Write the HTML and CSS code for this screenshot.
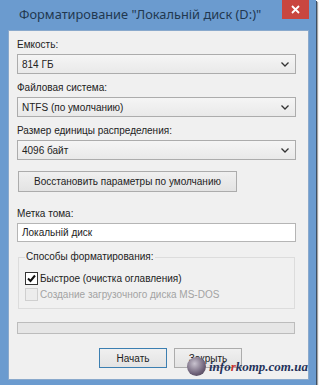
FILE: index.html
```html
<!DOCTYPE html>
<html lang="ru">
<head>
    <meta charset="UTF-8">
    <meta name="viewport" content="width=device-width, initial-scale=1.0">
    <title>Форматирование</title>
    <link rel="stylesheet" href="styles.css">
</head>
<body>
    <div class="window">
        <div class="titlebar">
            <span class="title">Форматирование "Локальній диск (D:)"</span>
            <span class="close">
                <svg width="9" height="9" viewBox="0 0 9 9"><path d="M1 1L8 8M8 1L1 8" stroke="#fff" stroke-width="1.8"/></svg>
            </span>
        </div>

        <div class="content">
            <div class="field">
                <label>Емкость:</label>
                <div class="select">
                    <span>814 ГБ</span>
                    <svg class="chevron" width="8" height="5" viewBox="0 0 8 5"><path d="M0.5 0.5L4 4L7.5 0.5" fill="none" stroke="#333" stroke-width="1.3"/></svg>
                </div>
            </div>
            <div class="field">
                <label>Файловая система:</label>
                <div class="select">
                    <span>NTFS (по умолчанию)</span>
                    <svg class="chevron" width="8" height="5" viewBox="0 0 8 5"><path d="M0.5 0.5L4 4L7.5 0.5" fill="none" stroke="#333" stroke-width="1.3"/></svg>
                </div>
            </div>
            <div class="field">
                <label>Размер единицы распределения:</label>
                <div class="select">
                    <span>4096 байт</span>
                    <svg class="chevron" width="8" height="5" viewBox="0 0 8 5"><path d="M0.5 0.5L4 4L7.5 0.5" fill="none" stroke="#333" stroke-width="1.3"/></svg>
                </div>
            </div>

            <div class="restore-row">
                <div class="btn restore">Восстановить параметры по умолчанию</div>
            </div>

            <div class="field label-field">
                <label>Метка тома:</label>
                <div class="input">Локальній диск</div>
            </div>

            <fieldset class="group">
                <legend>Способы форматирования:</legend>
                <div class="check">
                    <span class="box">
                        <svg width="11" height="11" viewBox="0 0 11 11"><path d="M2 5.5L4.5 8L9 2.5" fill="none" stroke="#111" stroke-width="2"/></svg>
                    </span>
                    Быстрое (очистка оглавления)
                </div>
                <div class="check disabled">
                    <span class="box"></span>
                    Создание загрузочного диска MS-DOS
                </div>
            </fieldset>

            <div class="progress"></div>

            <div class="actions">
                <div class="btn default">Начать</div>
                <div class="btn">Закрыть</div>
            </div>
        </div>
    </div>

    <!-- водяной знак -->
    <div class="watermark">
        <span class="logo"></span>
        <span class="site">info<span class="red">r</span>komp.com.ua</span>
    </div>
</body>
</html>
```

FILE: styles.css
```css
/* окно */
body {
    margin: 0;
    background-color: #ffffff;
    font-family: 'Liberation Sans', Arial, sans-serif;
    font-size: 10px;
    color: #222;
}

.window {
    width: 316px;
    height: 385px;
    background-color: #6b9bcf;
    display: flex;
    flex-direction: column;
    box-shadow: 1px 1px 0 #3d4f63, 2px 2px 1px rgba(0, 0, 0, 0.35);
}

.titlebar {
    height: 30px;
    display: flex;
    justify-content: space-between;
    align-items: flex-start;
}

.title {
    margin-left: 19px;
    margin-top: 5px;
    font-family: 'Noto Sans', sans-serif;
    font-size: 12.8px;
    color: #22384f;
    white-space: nowrap;
}

.close {
    width: 27px;
    height: 19px;
    margin-right: 7px;
    background-color: #c9463f;
    display: flex;
    align-items: center;
    justify-content: center;
}

.content {
    flex: 1;
    margin: 0 7px 5px 8px;
    padding: 8px 13px 0 9px;
    background-color: #f0f0f0;
    box-shadow: inset 0 0 0 1px #8aa9cc;
}

/* поля */
.field {
    margin-bottom: 7px;
}

.field label {
    display: block;
    line-height: 14px;
    margin-bottom: 2px;
}

.select {
    height: 18px;
    border: 1px solid #acacac;
    background: linear-gradient(#f5f5f5, #e9e9e9);
    display: flex;
    align-items: center;
    justify-content: space-between;
    padding: 0 6px 0 4px;
}

.input {
    height: 17px;
    line-height: 17px;
    border: 1px solid #b5b5b5;
    background-color: #ffffff;
    padding: 0 4px;
}

.label-field {
    margin-bottom: 8px;
}

/* кнопки */
.btn {
    box-sizing: border-box;
    height: 21px;
    border: 1px solid #acacac;
    background: linear-gradient(#f0f0f0, #e3e3e3);
    display: flex;
    align-items: center;
    justify-content: center;
    white-space: nowrap;
}

.restore-row {
    display: flex;
    margin: 11px 0 15px 1px;
}

.restore {
    width: 219px;
}

.default {
    border-color: #3c7fb1;
}

.actions {
    display: flex;
    gap: 7px;
    margin-top: 14px;
    padding-left: 82px;
}

.actions .btn {
    width: 68px;
    height: 20px;
}

/* группа */
.group {
    margin: 0 1px;
    padding: 6px 6px 6px;
    border: 1px solid #dcdcdc;
}

.group legend {
    padding: 0 1px;
    line-height: 14px;
}

.check {
    height: 16px;
    display: flex;
    align-items: center;
    gap: 2px;
}

.box {
    width: 11px;
    height: 11px;
    border: 1px solid #333;
    background-color: #ffffff;
    display: flex;
}

.check.disabled {
    color: #a3a3a3;
}

.check.disabled .box {
    border-color: #cfcfcf;
    background-color: #ececec;
}

.progress {
    height: 10px;
    margin: 13px 1px 0 0;
    border: 1px solid #bcbcbc;
    background-color: #e6e6e6;
}

/* водяной знак */
.watermark {
    position: absolute;
    left: 187px;
    top: 357px;
    display: flex;
    align-items: center;
    gap: 3px;
}

.logo {
    width: 19px;
    height: 19px;
    border-radius: 50%;
    background: radial-gradient(circle at 40% 35%, #c9c3cf, #6e6178 60%, #3e3444);
}

.site {
    font-family: 'Liberation Serif', serif;
    font-style: italic;
    font-weight: bold;
    font-size: 13px;
    color: #25325a;
}

.red {
    color: #c8322d;
}
```
